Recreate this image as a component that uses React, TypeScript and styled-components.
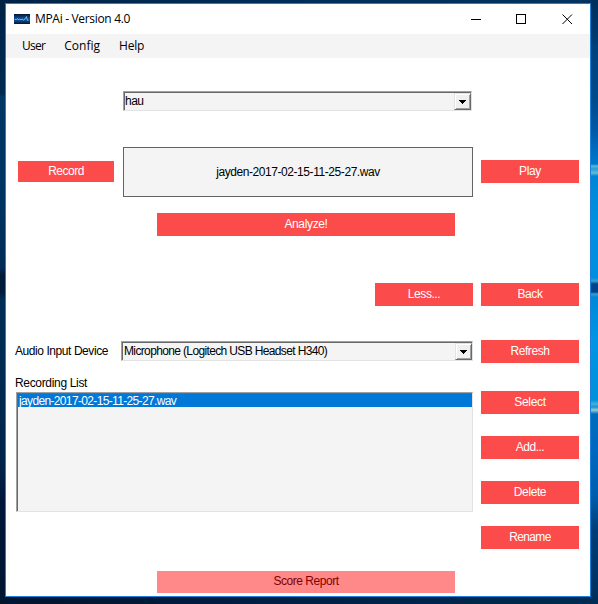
import React from "react";
import styled, { createGlobalStyle, css } from "styled-components";

const GlobalStyle = createGlobalStyle`
  * { box-sizing: border-box; }
  body { margin: 0; overflow: hidden; }
`;

const Desktop = styled.div`
  width: 598px;
  height: 604px;
  padding: 3px 7px 7px 5px;
  font: 12px/14px "Liberation Sans", Arial, sans-serif;
  color: #000;
  background:
    linear-gradient(
        180deg,
        #00305c 0,
        #003a70 40px,
        #00417c 46px,
        #004a8c 100px,
        #0058a6 130px,
        #006cc0 150px,
        #0078cc 164px,
        #55b8d8 166px,
        #2a9bd8 169px,
        #62bdd6 173px,
        #0085d6 176px,
        #0090e0 220px,
        #008fe0 278px,
        #3aa0cc 281px,
        #00458c 284px,
        #00458c 292px,
        #3a9cd0 294px,
        #0088d8 297px,
        #0095e4 340px,
        #0090dc 400px,
        #48b0da 404px,
        #1c92d0 407px,
        #90cfd2 410px,
        #006cbc 414px,
        #0068c0 450px,
        #005eae 495px,
        #003d78 530px,
        #00305e 597px,
        #002b52 604px
      )
      right top / 7px 604px no-repeat,
    linear-gradient(
        180deg,
        #002347 0,
        #002a52 94px,
        #003766 97px,
        #003463 200px,
        #002c57 268px,
        #001a3a 275px,
        #001b3b 292px,
        #002d56 300px,
        #002a52 380px,
        #002348 470px,
        #00173a 500px,
        #001530 604px
      )
      left top / 5px 604px no-repeat,
    linear-gradient(90deg, #001530, #002044 50%, #002b52) left bottom / 100% 7px no-repeat,
    linear-gradient(90deg, #002347, #002e5a 50%, #003462);
`;

const Window = styled.div`
  width: 586px;
  height: 594px;
  display: flex;
  flex-direction: column;
  border: 1px solid #1a82da;
  background: #fff;
`;

const systemText = css`
  font: 12px/16px "Open Sans", "Noto Sans", sans-serif;
`;

const TitleBar = styled.header`
  height: 30px;
  flex: none;
  display: flex;
  align-items: center;
  padding-left: 8px;
  ${systemText}
`;

const Title = styled.span`
  flex: 1;
  margin-left: 5px;
  letter-spacing: -0.32px;
`;

const AppIcon = styled.svg`
  width: 16px;
  height: 10px;
  flex: none;
`;

const Caption = styled.svg<{ $gap: number }>`
  width: 11px;
  height: 11px;
  flex: none;
  margin-right: ${(p) => p.$gap}px;
  shape-rendering: crispEdges;
`;

const MenuBar = styled.nav`
  height: 24px;
  flex: none;
  display: flex;
  align-items: center;
  gap: 19px;
  padding-left: 16px;
  background: #f4f4f4;
  ${systemText}
`;

const Body = styled.main`
  flex: 1;
  padding: 33px 11px 0 9px;
`;

const Row = styled.div<{ $top?: number; $left?: number; $align?: string }>`
  display: flex;
  align-items: ${(p) => p.$align ?? "center"};
  gap: 8px;
  margin-top: ${(p) => p.$top ?? 0}px;
  padding-left: ${(p) => p.$left ?? 0}px;
`;

const Text = styled.span<{ $track?: number }>`
  letter-spacing: ${(p) => p.$track ?? -0.43}px;
  white-space: nowrap;
`;

const Button = styled.button<{ $width?: number; $height?: number }>`
  width: ${(p) => p.$width ?? 98}px;
  height: ${(p) => p.$height ?? 23}px;
  flex: none;
  margin: 0 0 1px;
  padding: 0 0 2px;
  border: 0;
  font: inherit;
  color: #fff;
  background: #fc4b4b;
  &:disabled {
    color: #800000;
    background: #ff8888;
  }
`;

const Combo = styled.div<{ $width: number; $inset: number }>`
  width: ${(p) => p.$width}px;
  height: 20px;
  flex: none;
  display: flex;
  align-items: center;
  justify-content: space-between;
  margin-bottom: 2px;
  padding-left: ${(p) => p.$inset}px;
  border: 1px solid;
  border-color: #a0a0a0 #e3e3e3 #e3e3e3 #a0a0a0;
  box-shadow: inset 1px 1px #696969;
  background: #f4f4f4;
`;

const DropButton = styled.span`
  width: 17px;
  height: 17px;
  margin-top: 1px;
  display: grid;
  place-items: center;
  border: 1px solid;
  border-color: #e3e3e3 #696969 #696969 #e3e3e3;
  box-shadow: inset 1px 1px #fff, inset -1px -1px #a0a0a0;
  background: #f0f0f0;
`;

const FileBox = styled.div`
  width: 350px;
  height: 50px;
  margin-left: 1px;
  flex: none;
  display: grid;
  place-items: center;
  border: 1px solid #646464;
  background: #f4f4f4;
`;

const Label = styled.label<{ $width?: number; $lift?: number }>`
  width: ${(p) => (p.$width ? `${p.$width}px` : "auto")};
  margin-bottom: ${(p) => p.$lift ?? 0}px;
  display: block;
`;

const ListColumn = styled.section`
  width: 458px;
  flex: none;
`;

const ListBox = styled.ul`
  width: 457px;
  height: 120px;
  margin: 2px 0 0 1px;
  padding: 1px 0 0 1px;
  list-style: none;
  border: 1px solid;
  border-color: #a0a0a0 #e3e3e3 #e3e3e3 #a0a0a0;
  box-shadow: inset 1px 1px #696969;
  background: #f4f4f4;
`;

const Item = styled.li`
  height: 13px;
  padding-left: 1px;
  line-height: 15px;
  white-space: nowrap;
  color: #fff;
  background: #0078d7;
`;

const Actions = styled.div`
  display: flex;
  flex-direction: column;
  gap: 21px;
  padding-top: 15px;
`;

const FILE = "jayden-2017-02-15-11-25-27.wav";

const LIST_ACTIONS: [string, number][] = [
  ["Select", -0.35],
  ["Add...", -0.5],
  ["Delete", -0.4],
  ["Rename", -0.65],
];

function DropDown({ width, value, track, inset }: { width: number; value: string; track: number; inset: number }) {
  return (
    <Combo $width={width} $inset={inset}>
      <Text $track={track}>{value}</Text>
      <DropButton>
        <svg width="7" height="4" viewBox="0 0 7 4" shapeRendering="crispEdges">
          <path d="M0 0h7v1H0zM1 1h5v1H1zM2 2h3v1H2zM3 3h1v1H3z" />
        </svg>
      </DropButton>
    </Combo>
  );
}

export default function App() {
  return (
    <>
      <GlobalStyle />
      <Desktop>
        <Window>
          <TitleBar>
            <AppIcon viewBox="0 0 16 10">
              <defs>
                <linearGradient id="sky" x2="0" y2="1">
                  <stop stopColor="#071630" />
                  <stop offset=".55" stopColor="#0f5aa8" />
                  <stop offset="1" stopColor="#06142f" />
                </linearGradient>
              </defs>
              <path d="M0 0h16v10H0z" fill="url(#sky)" />
              <path
                d="M1 5.5h1.5l1-1 1 1.5 1-1 1.5 1 1-1 1.5 1L11 5l1.5-2.5L13 5l1 2"
                fill="none"
                stroke="#8cc6ee"
                strokeWidth=".8"
              />
            </AppIcon>
            <Title>MPAi - Version 4.0</Title>
            <Caption $gap={34} viewBox="0 0 11 11">
              <path d="M0 5h10v1h-10z" />
            </Caption>
            <Caption $gap={35} viewBox="0 0 11 11">
              <path d="M.5 .5h9v9h-9z" fill="none" stroke="#000" />
            </Caption>
            <Caption $gap={17} viewBox="0 0 11 11">
              <path d="M.5 .5l9.5 9.5M10 .5L.5 10" stroke="#000" shapeRendering="auto" />
            </Caption>
          </TitleBar>
          <MenuBar>
            <Text $track={-0.7}>User</Text>
            <Text $track={0}>Config</Text>
            <Text $track={-0.2}>Help</Text>
          </MenuBar>
          <Body>
            <Row $left={108}>
              <DropDown width={349} value="hau" track={-0.5} inset={1} />
            </Row>
            <Row $top={34} $left={3}>
              <Button $width={96} $height={21}><Text $track={-0.5}>Record</Text></Button>
              <FileBox><Text>{FILE}</Text></FileBox>
              <Button><Text $track={-0.3}>Play</Text></Button>
            </Row>
            <Row $top={16} $left={142}>
              <Button $width={298}><Text $track={-0.35}>Analyze!</Text></Button>
            </Row>
            <Row $top={46} $left={360}>
              <Button><Text>Less...</Text></Button>
              <Button><Text>Back</Text></Button>
            </Row>
            <Row $top={33}>
              <Label $width={98} $lift={2}><Text>Audio Input Device</Text></Label>
              <DropDown width={352} value="Microphone (Logitech USB Headset H340)" track={-0.64} inset={2} />
              <Button><Text>Refresh</Text></Button>
            </Row>
            <Row $top={12} $align="flex-start">
              <ListColumn>
                <Label><Text $track={-0.33}>Recording List</Text></Label>
                <ListBox>
                  <Item><Text $track={-0.65}>{FILE}</Text></Item>
                </ListBox>
              </ListColumn>
              <Actions>
                {LIST_ACTIONS.map(([name, track]) => (
                  <Button key={name}><Text $track={track}>{name}</Text></Button>
                ))}
              </Actions>
            </Row>
            <Row $top={21} $left={142}>
              <Button $width={298} $height={22} disabled><Text $track={-0.47}>Score Report</Text></Button>
            </Row>
          </Body>
        </Window>
      </Desktop>
    </>
  );
}
